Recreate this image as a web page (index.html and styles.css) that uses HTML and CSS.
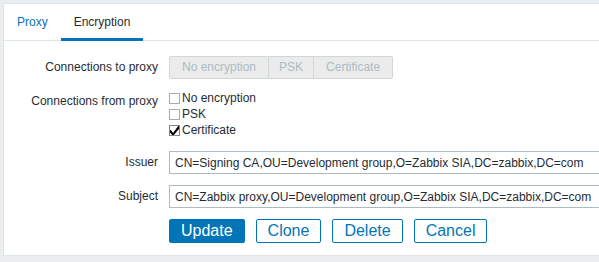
FILE: index.html
```html
<!DOCTYPE html>
<html>
<head>
    <title>Proxy encryption</title>
    <link rel="stylesheet" href="styles.css">
</head>
<body>
    <div class="page">
        <div class="panel">
            <div class="tabs">
                <a href="#" class="tab">Proxy</a>
                <a href="#" class="tab active">Encryption</a>
            </div>

            <form class="form-grid">
                <label class="form-label">Connections to proxy</label>
                <div class="segmented">
                    <span class="segment">No encryption</span>
                    <span class="segment narrow">PSK</span>
                    <span class="segment">Certificate</span>
                </div>

                <label class="form-label">Connections from proxy</label>
                <div class="checkbox-list">
                    <label class="check-row"><span class="box"></span>No encryption</label>
                    <label class="check-row"><span class="box"></span>PSK</label>
                    <label class="check-row">
                        <span class="box checked">
                            <svg width="9" height="9" viewBox="0 0 9 9"><path d="M0.5 4.5 L3 8 L8.5 0.5 L8.5 2.5 L3 9 L0.5 6 Z" fill="#000" stroke="#000" stroke-width="1.2" stroke-linejoin="round"/></svg>
                        </span>Certificate
                    </label>
                </div>

                <label class="form-label" for="issuer">Issuer</label>
                <input type="text" id="issuer" class="text-input" value="CN=Signing CA,OU=Development group,O=Zabbix SIA,DC=zabbix,DC=com">

                <label class="form-label" for="subject">Subject</label>
                <input type="text" id="subject" class="text-input" value="CN=Zabbix proxy,OU=Development group,O=Zabbix SIA,DC=zabbix,DC=com">

                <div></div>
                <div class="buttons">
                    <button type="button" class="btn primary">Update</button>
                    <button type="button" class="btn">Clone</button>
                    <button type="button" class="btn">Delete</button>
                    <button type="button" class="btn">Cancel</button>
                </div>
            </form>
        </div>
    </div>
</body>
</html>
```

FILE: styles.css
```css
/* Page */
body {
    margin: 0;
    background-color: #ebeef0;
    color: #1f2c33;
    font-family: "Liberation Sans", Arial, sans-serif;
    font-size: 12px;
    overflow: hidden;
}

.page {
    padding: 3px 0 0 3px;
}

.panel {
    width: 660px;
    height: 253px;
    background-color: #ffffff;
    border: 1px solid #dfe4e7;
    box-sizing: border-box;
}

/* Tabs */
.tabs {
    display: flex;
    height: 36px;
    border-bottom: 1px solid #dfe4e7;
}

.tab {
    display: flex;
    align-items: center;
    padding: 0 13px;
    color: #0275b8;
    text-decoration: none;
    border-bottom: 3px solid transparent;
    margin-bottom: -1px;
    padding-top: 1px;
}

.tab.active {
    color: #1f2c33;
    border-bottom-color: #0275b8;
}

/* Form */
.form-grid {
    display: grid;
    grid-template-columns: 154px 1fr;
    column-gap: 11px;
    row-gap: 11px;
    padding-top: 15px;
    margin: 0;
}

.form-label {
    text-align: right;
    line-height: 23px;
    height: 23px;
}

.segmented {
    display: flex;
}

.segment {
    height: 23px;
    line-height: 21px;
    padding: 0 12px;
    box-sizing: border-box;
    background-color: #ebebeb;
    border: 1px solid #d0d7db;
    color: #acbbc2;
}

.segment.narrow {
    padding: 0 10px;
}

.segment + .segment {
    border-left: none;
}

.segment:first-child {
    border-radius: 2px 0 0 2px;
}

.segment:last-child {
    border-radius: 0 2px 2px 0;
}

.checkbox-list {
    padding-bottom: 2px;
}

.check-row {
    display: flex;
    align-items: center;
    height: 16px;
    gap: 2px;
}

.box {
    width: 11px;
    height: 11px;
    border: 1px solid #a6aeb2;
    box-sizing: border-box;
    background-color: #ffffff;
    display: flex;
    align-items: center;
    justify-content: center;
}

.box.checked {
    border-color: #7d878b;
}

.text-input {
    width: 460px;
    height: 23px;
    box-sizing: border-box;
    border: 1px solid #acbbc2;
    padding: 0 5px;
    font-family: "Liberation Sans", Arial, sans-serif;
    font-size: 12px;
    color: #1f2c33;
    margin: 0;
}

/* Buttons */
.buttons {
    display: flex;
    gap: 11px;
}

.btn {
    height: 24px;
    padding: 0 11px;
    border: 1px solid #0275b8;
    border-radius: 2px;
    background-color: #ffffff;
    color: #0275b8;
    font-family: "Liberation Sans", Arial, sans-serif;
    font-size: 16px;
    line-height: 20px;
}

.btn.primary {
    background-color: #0275b8;
    color: #ffffff;
}
```
